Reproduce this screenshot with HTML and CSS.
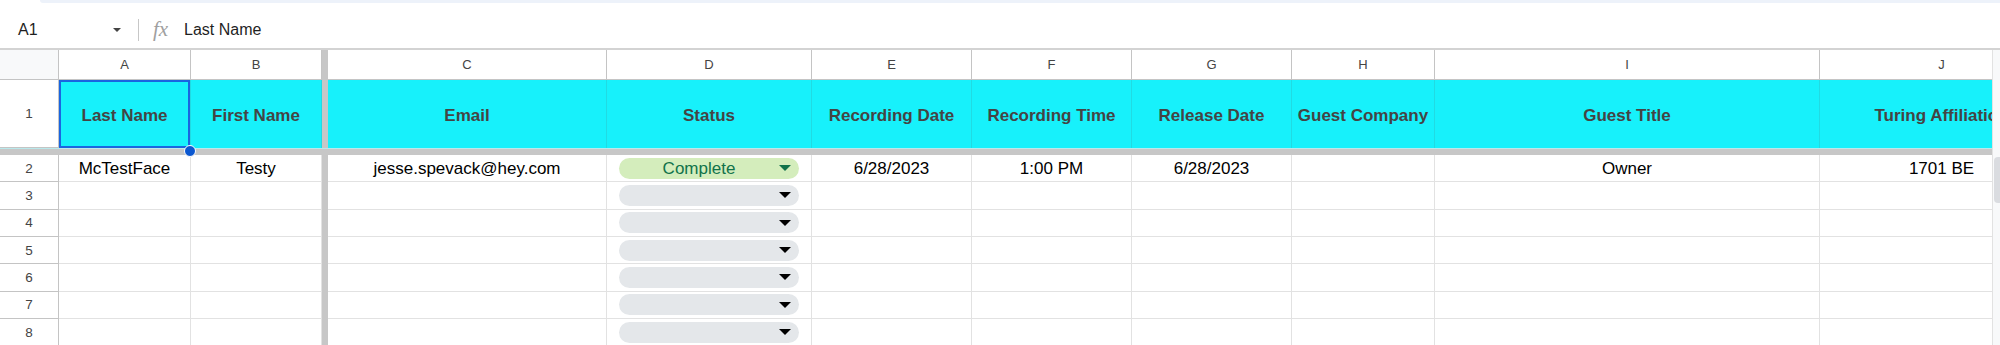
FILE: index.html
```html
<!DOCTYPE html>
<html>
<head>
<meta charset="utf-8">
<link rel="stylesheet" href="styles.css">
</head>
<body>
<div class="app">
  <div class="toolbar-edge"></div>
  <div class="formula-bar">
    <div class="name-box">
      <span class="cell-ref">A1</span>
      <span class="nb-arrow"></span>
    </div>
    <div class="fb-sep"></div>
    <span class="fx">fx</span>
    <span class="fb-value">Last Name</span>
  </div>
  <div class="sheet">
    <div class="grid">
      <!-- column letters -->
      <div class="c corner"></div>
      <div class="c colhdr">A</div>
      <div class="c colhdr">B</div>
      <div class="c vdiv"></div>
      <div class="c colhdr">C</div>
      <div class="c colhdr">D</div>
      <div class="c colhdr">E</div>
      <div class="c colhdr">F</div>
      <div class="c colhdr">G</div>
      <div class="c colhdr">H</div>
      <div class="c colhdr">I</div>
      <div class="c colhdr">J</div>
      <!-- row 1 -->
      <div class="c rowhdr">1</div>
      <div class="c head selected">Last Name<span class="handle"></span></div>
      <div class="c head">First Name</div>
      <div class="c vdiv"></div>
      <div class="c head">Email</div>
      <div class="c head">Status</div>
      <div class="c head">Recording Date</div>
      <div class="c head">Recording Time</div>
      <div class="c head">Release Date</div>
      <div class="c head">Guest Company</div>
      <div class="c head">Guest Title</div>
      <div class="c head">Turing Affiliation</div>
      <!-- frozen divider -->
      <div class="hdiv"></div>
      <!-- row 2 -->
      <div class="c rowhdr">2</div>
      <div class="c data">McTestFace</div>
      <div class="c data">Testy</div>
      <div class="c vdiv"></div>
      <div class="c data">jesse.spevack@hey.com</div>
      <div class="c data chipcell"><div class="chip done"><span class="chip-text">Complete</span><span class="chip-arrow"></span></div></div>
      <div class="c data">6/28/2023</div>
      <div class="c data">1:00 PM</div>
      <div class="c data">6/28/2023</div>
      <div class="c data"></div>
      <div class="c data">Owner</div>
      <div class="c data">1701 BE</div>
      <!-- row 3 -->
      <div class="c rowhdr">3</div>
      <div class="c data"></div><div class="c data"></div><div class="c vdiv"></div><div class="c data"></div>
      <div class="c data chipcell"><div class="chip"><span class="chip-text"></span><span class="chip-arrow"></span></div></div>
      <div class="c data"></div><div class="c data"></div><div class="c data"></div><div class="c data"></div><div class="c data"></div><div class="c data"></div>
      <!-- row 4 -->
      <div class="c rowhdr">4</div>
      <div class="c data"></div><div class="c data"></div><div class="c vdiv"></div><div class="c data"></div>
      <div class="c data chipcell"><div class="chip"><span class="chip-text"></span><span class="chip-arrow"></span></div></div>
      <div class="c data"></div><div class="c data"></div><div class="c data"></div><div class="c data"></div><div class="c data"></div><div class="c data"></div>
      <!-- row 5 -->
      <div class="c rowhdr">5</div>
      <div class="c data"></div><div class="c data"></div><div class="c vdiv"></div><div class="c data"></div>
      <div class="c data chipcell"><div class="chip"><span class="chip-text"></span><span class="chip-arrow"></span></div></div>
      <div class="c data"></div><div class="c data"></div><div class="c data"></div><div class="c data"></div><div class="c data"></div><div class="c data"></div>
      <!-- row 6 -->
      <div class="c rowhdr">6</div>
      <div class="c data"></div><div class="c data"></div><div class="c vdiv"></div><div class="c data"></div>
      <div class="c data chipcell"><div class="chip"><span class="chip-text"></span><span class="chip-arrow"></span></div></div>
      <div class="c data"></div><div class="c data"></div><div class="c data"></div><div class="c data"></div><div class="c data"></div><div class="c data"></div>
      <!-- row 7 -->
      <div class="c rowhdr">7</div>
      <div class="c data"></div><div class="c data"></div><div class="c vdiv"></div><div class="c data"></div>
      <div class="c data chipcell"><div class="chip"><span class="chip-text"></span><span class="chip-arrow"></span></div></div>
      <div class="c data"></div><div class="c data"></div><div class="c data"></div><div class="c data"></div><div class="c data"></div><div class="c data"></div>
      <!-- row 8 -->
      <div class="c rowhdr">8</div>
      <div class="c data"></div><div class="c data"></div><div class="c vdiv"></div><div class="c data"></div>
      <div class="c data chipcell"><div class="chip"><span class="chip-text"></span><span class="chip-arrow"></span></div></div>
      <div class="c data"></div><div class="c data"></div><div class="c data"></div><div class="c data"></div><div class="c data"></div><div class="c data"></div>
    </div>
    <div class="vscroll">
      <div class="vs-head"></div>
      <div class="vs-track"><div class="vs-thumb"></div></div>
    </div>
  </div>
</div>
</body>
</html>
```

FILE: styles.css
```css
* { box-sizing: border-box; }
html, body { margin: 0; padding: 0; background: #fff; }
body {
  width: 2000px;
  height: 345px;
  overflow: hidden;
  font-family: "Liberation Sans", Arial, sans-serif;
}
.app { display: flex; flex-direction: column; width: 2000px; }

.toolbar-edge {
  height: 3px;
  margin-left: 40px;
  background: #edf2fa;
  border-bottom-left-radius: 3px;
}

.formula-bar {
  height: 47px;
  display: flex;
  align-items: center;
  padding-left: 18px;
  padding-top: 8px;
  border-bottom: 2px solid #d3d3d3;
}
.name-box {
  width: 117px;
  display: flex;
  align-items: center;
  justify-content: space-between;
  padding-right: 14px;
}
.cell-ref { font-size: 16px; color: #1f1f1f; }
.nb-arrow {
  width: 0; height: 0;
  border-left: 4.5px solid transparent;
  border-right: 4.5px solid transparent;
  border-top: 4.5px solid #444;
}
.fb-sep { width: 1px; height: 22px; background: #c7c7c7; margin-left: 3px; }
.fx {
  font-family: "Liberation Serif", "Times New Roman", serif;
  font-style: italic;
  font-size: 21px;
  color: #a0a0a0;
  margin-left: 14px;
  width: 31px;
}
.fb-value { font-size: 16px; color: #1f1f1f; }

.sheet { display: flex; height: 295px; }
.grid {
  width: 1992px;
  overflow: hidden;
  display: grid;
  grid-template-columns: 59px 132px 131px 6px 279px 205px 160px 160px 160px 143px 385px 244px;
  grid-template-rows: 30px 68px 7px repeat(7, 27.33px);
  flex: none;
}
.c {
  border-right: 1px solid #e2e2e2;
  border-bottom: 1px solid #e2e2e2;
  display: flex;
  align-items: center;
  justify-content: center;
  white-space: nowrap;
  overflow: visible;
  position: relative;
}
.corner {
  background: #f8f9fa;
  border-right: 1px solid #c4c4c4;
  border-bottom: 1px solid #c4c4c4;
}
.colhdr {
  font-size: 13px;
  color: #444;
  border-right: 1px solid #c4c4c4;
  border-bottom: 1px solid #c4c4c4;
}
.rowhdr {
  font-size: 13.5px;
  color: #444;
  border-right: 1px solid #c4c4c4;
  border-bottom: 1px solid #c4c4c4;
}
.vdiv {
  background: #c7c7c7;
  border: none;
}
.hdiv {
  grid-column: 1 / -1;
  background: #c7c7c7;
  border-top: 1px solid #b9e9ec;
}
.head {
  background: #17f1fb;
  border-right: 1px solid #20dbe3;
  border-bottom: none;
  font-weight: bold;
  font-size: 17px;
  color: #444444;
  padding-top: 3px;
}
.selected { box-shadow: inset 0 0 0 2px #1a65e0; z-index: 2; }
.handle {
  position: absolute;
  right: -6px;
  bottom: -9px;
  width: 12px;
  height: 12px;
  border-radius: 50%;
  background: #0b57d0;
  border: 1.5px solid #fff;
  z-index: 3;
}
.data { font-size: 17px; color: #000; padding-top: 1px; }

.chipcell { padding: 0 12px; }
.chip {
  width: 100%;
  height: 21px;
  border-radius: 11px;
  background: #e4e7ea;
  display: flex;
  align-items: center;
}
.chip.done { background: #d4edbc; }
.chip-text { flex: 1; text-align: center; font-size: 17px; color: #11734b; padding-top: 1px; }
.chip-arrow {
  width: 0; height: 0;
  margin-right: 8px;
  border-left: 6px solid transparent;
  border-right: 6px solid transparent;
  border-top: 6px solid #000;
}
.chip.done .chip-arrow { border-top-color: #11734b; }

.vscroll {
  width: 8px;
  display: flex;
  flex-direction: column;
  background: #f8f9fa;
  border-left: 1px solid #e2e2e2;
}
.vs-head { height: 105px; }
.vs-track { flex: 1; padding-top: 2px; }
.vs-thumb {
  width: 6px;
  height: 46px;
  margin-left: 1px;
  border-radius: 4px 0 0 4px;
  background: #dadce0;
}
```
